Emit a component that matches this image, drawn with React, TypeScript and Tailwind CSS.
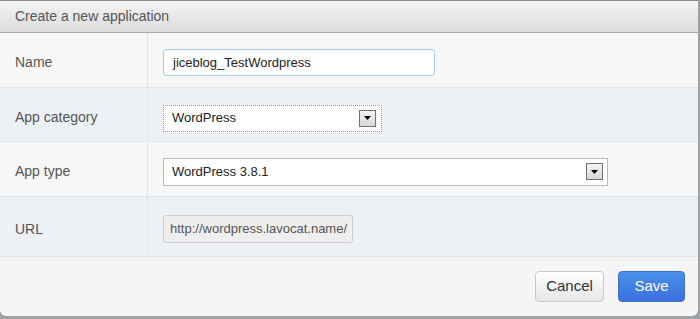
const font = { fontFamily: '"Liberation Sans", Arial, sans-serif' }

function Arrow() {
  return (
    <span className="flex h-[17px] w-[17px] shrink-0 items-center justify-center border border-[#707070] bg-gradient-to-b from-[#f4f4f4] to-[#d8d8d8]">
      <svg width="7" height="4" viewBox="0 0 7 4">
        <path d="M0 0h7L3.5 4z" fill="#000" />
      </svg>
    </span>
  )
}

function Row({ label, shade, h, children }: { label: string; shade: boolean; h: string; children: React.ReactNode }) {
  return (
    <div className={`flex border-b border-[#dde5ee] ${h} ${shade ? "bg-[#edf1f6]" : "bg-[#f7f7f7]"}`}>
      <div className="flex w-[148px] shrink-0 items-center border-r border-[#dde5ee] pl-[15px] pt-[5px] text-[14px] text-[#555]">
        {label}
      </div>
      <div className="flex flex-1 items-center pl-[15px] pt-[5px]">{children}</div>
    </div>
  )
}

export default function App() {
  return (
    <div className="h-[319px] w-[700px] bg-[#9fa2a5]" style={font}>
      <div className="flex h-[316px] w-[698px] flex-col overflow-hidden rounded-b-[6px] border-t border-[#8c8c8c] bg-[#f5f5f5]">
        <div className="flex h-[32px] shrink-0 items-center border-b border-[#a9a9a9] bg-gradient-to-b from-[#f4f4f4] to-[#dcdcdc] pl-[15px] text-[14px] text-[#555]">
          Create a new application
        </div>

        <Row label="Name" shade={false} h="h-[55px]">
          <div className="flex h-[27px] w-[272px] items-center rounded-[3px] border border-[#a9cdec] bg-white pl-[9px] text-[13px] text-[#222] shadow-[inset_0_1px_2px_rgba(0,0,0,0.06)]">
            jiceblog_TestWordpress
          </div>
        </Row>

        <Row label="App category" shade={true} h="h-[54px]">
          <div className="mt-[2px] flex h-[27px] w-[219px] items-center justify-between border border-dotted border-[#6ea6d8] bg-white pl-[8px] pr-[5px] text-[13px] text-[#222]">
            WordPress
            <Arrow />
          </div>
        </Row>

        <Row label="App type" shade={false} h="h-[55px]">
          <div className="flex h-[28px] w-[445px] items-center justify-between border border-[#b8b8b8] bg-white pl-[8px] pr-[4px] text-[13px] text-[#222]">
            WordPress 3.8.1
            <Arrow />
          </div>
        </Row>

        <Row label="URL" shade={true} h="h-[60px]">
          <div className="flex h-[28px] w-[190px] items-center rounded-[3px] border border-[#cccccc] bg-[#eeeeee] pl-[6px] text-[13px] text-[#555]">
            http://wordpress.lavocat.name/
          </div>
        </Row>

        <div className="flex flex-1 items-center justify-end gap-[14px] pr-[13px]">
          <button className="h-[31px] w-[69px] rounded-[4px] border border-[#c8c8c8] bg-gradient-to-b from-white to-[#e6e6e6] text-[15px] text-[#333]">
            Cancel
          </button>
          <button className="h-[31px] w-[67px] rounded-[4px] border border-[#3a72d0] bg-gradient-to-b from-[#4a90e8] to-[#3a6fdd] text-[15px] text-white">
            Save
          </button>
        </div>
      </div>
    </div>
  )
}
